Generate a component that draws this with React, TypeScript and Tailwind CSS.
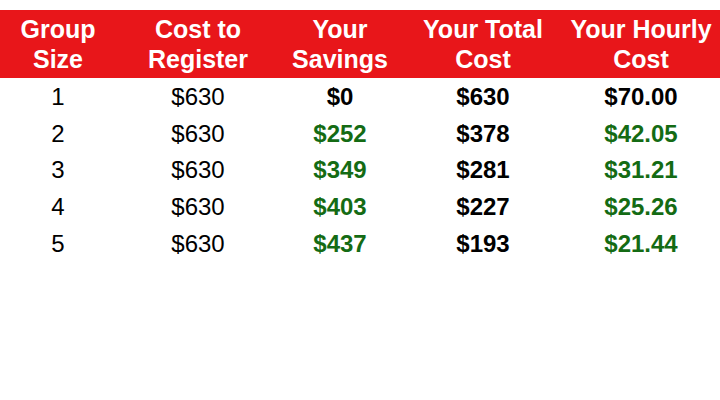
const rows = [
  { size: "1", cost: "$630", savings: "$0", total: "$630", hourly: "$70.00", green: false },
  { size: "2", cost: "$630", savings: "$252", total: "$378", hourly: "$42.05", green: true },
  { size: "3", cost: "$630", savings: "$349", total: "$281", hourly: "$31.21", green: true },
  { size: "4", cost: "$630", savings: "$403", total: "$227", hourly: "$25.26", green: true },
  { size: "5", cost: "$630", savings: "$437", total: "$193", hourly: "$21.44", green: true },
];

const cols = "grid grid-cols-[116px_164px_120px_166px_150px]";

export default function App() {
  return (
    <div className="w-[720px] h-[400px] bg-white pt-[10px] font-['Liberation_Sans',Arial,sans-serif] text-[24px]">
      <div className={`${cols} h-[68px] items-center bg-[#e8161a] text-white font-bold text-[25px] leading-[30px] text-center`}>
        <div>Group<br />Size</div>
        <div>Cost to<br />Register</div>
        <div>Your<br />Savings</div>
        <div>Your Total<br />Cost</div>
        <div>Your Hourly<br />Cost</div>
      </div>
      <div className="pt-[1px]">
        {rows.map((r) => (
          <div key={r.size} className={`${cols} h-[36.6px] items-center text-center text-black leading-none`}>
            <div>{r.size}</div>
            <div>{r.cost}</div>
            <div className={`font-bold ${r.green ? "text-[#146b14]" : "text-black"}`}>{r.savings}</div>
            <div className="font-bold">{r.total}</div>
            <div className={`font-bold ${r.green ? "text-[#146b14]" : "text-black"}`}>{r.hourly}</div>
          </div>
        ))}
      </div>
    </div>
  );
}
